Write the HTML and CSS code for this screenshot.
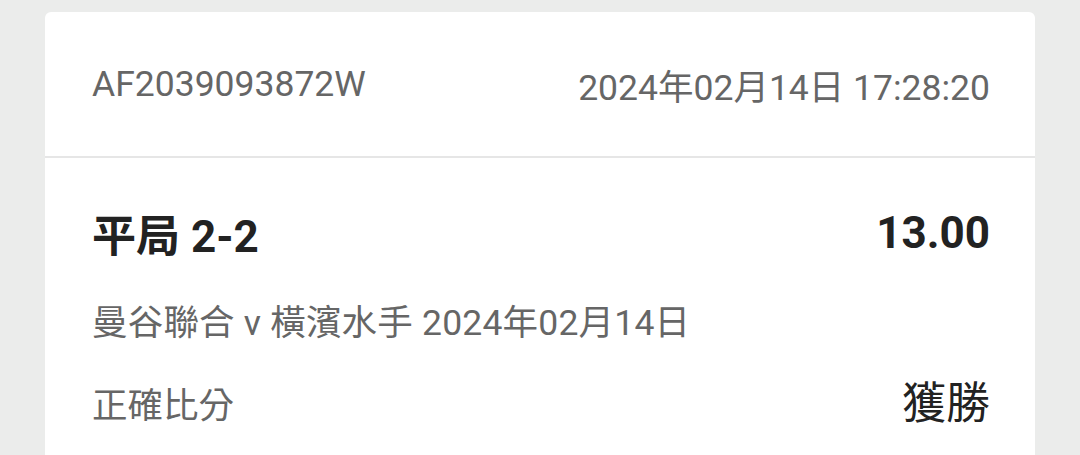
FILE: index.html
```html
<!DOCTYPE html>
<html lang="zh-Hant">
	<head>
		<meta charset="utf-8">
		<title>注單詳情</title>
		<meta name="viewport" content="width=device-width, initial-scale=1, user-scalable=no">
		<link rel="stylesheet" href="styles.css">
	</head>
	<body>
		<div class="ticket">
			<div class="ticket-header">
				<span class="ticket-id">AF2039093872W</span>
				<span class="ticket-time">2024年02月14日 17:28:20</span>
			</div>
			<div class="ticket-body">
				<div class="selection-row">
					<span class="selection">平局 2-2</span>
					<span class="odds">13.00</span>
				</div>
				<div class="match">曼谷聯合 v 橫濱水手 2024年02月14日</div>
				<div class="market-row">
					<span class="market">正確比分</span>
					<span class="result">獲勝</span>
				</div>
			</div>
		</div>
	</body>
</html>
```

FILE: styles.css
```css
html, body {
	margin: 0;
	height: 100%;
	overflow: hidden;
}

body {
	font-family: Roboto, "Noto Sans CJK TC", sans-serif;
	background-color: #ebeceb;
	padding: 12px 45px 0px 45px;
	box-sizing: border-box;
}

.ticket {
	background-color: #fff;
	border-radius: 6px;
	min-height: 600px;
}

.ticket-header {
	display: flex;
	justify-content: space-between;
	align-items: center;
	height: 144px;
	padding: 0px 45px 0px 47px;
	border-bottom: 2px solid #e6e6e6;
	font-size: 35.5px;
	color: #666;
}

.ticket-body {
	padding: 47px 45px 0px 47px;
}

.selection-row {
	display: flex;
	justify-content: space-between;
	align-items: center;
	height: 56px;
	font-size: 44px;
	font-weight: 700;
	color: #222;
}

.match {
	margin-top: 37px;
	line-height: 50px;
	font-size: 35.5px;
	letter-spacing: 0.2px;
	color: #666;
}

.market-row {
	display: flex;
	justify-content: space-between;
	align-items: center;
	height: 56px;
	margin-top: 24px;
}

.market {
	font-size: 35.5px;
	color: #666;
	position: relative;
	top: 2px;
}

.result {
	font-size: 44px;
	color: #222;
}
```
